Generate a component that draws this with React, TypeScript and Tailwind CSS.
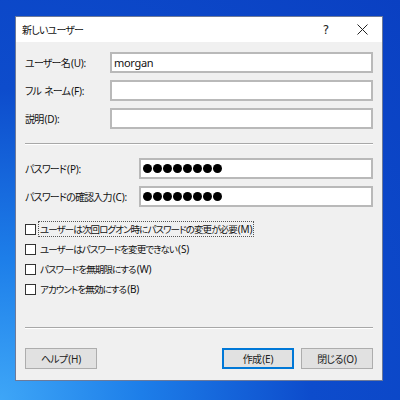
import React from "react";

const font = "font-['Noto_Sans_CJK_JP','Noto_Sans',sans-serif] [font-feature-settings:'palt'] text-[10px] leading-[14px]";

function T({ s, tr = "tracking-[-0.8px]" }: { s: string; tr?: string }) {
  const i = s.indexOf("(");
  const jp = i >= 0 ? s.slice(0, i) : s;
  const la = i >= 0 ? s.slice(i) : "";
  const parts = jp.split(" ");
  return (
    <span className="whitespace-nowrap">
      {parts.map((p, k) => (
        <span key={k} className={tr + (k > 0 ? " ml-[3px]" : "")}>
          {p}
        </span>
      ))}
      {la && <span className="font-['Noto_Sans',sans-serif] text-[10px] tracking-[-0.2px] ml-[1px]">{la}</span>}
    </span>
  );
}

function Field({ value }: { value?: string }) {
  return (
    <div className="flex-1 h-[21px] bg-white border-2 border-[#b9b9b9] flex items-center pl-[2px] text-[#111] text-[11px] font-['Noto_Sans',sans-serif] tracking-[-0.3px]">
      {value}
    </div>
  );
}

function Dots() {
  return (
    <div className="flex-1 h-[21px] bg-white border-2 border-[#b9b9b9] flex items-center pl-[2px] gap-[1px]">
      {Array.from({ length: 8 }).map((_, i) => (
        <span key={i} className="w-[9px] h-[9px] rounded-full bg-black" />
      ))}
    </div>
  );
}

function Check({ label, focus }: { label: string; focus?: boolean }) {
  return (
    <div className="h-[20px] flex items-center">
      <span className="w-[11px] h-[11px] border border-[#333] bg-white shrink-0" />
      <span
        className={
          "ml-[2px] px-[1px] text-[#111] flex" +
          (focus ? " border border-dotted border-[#555]" : " border border-transparent")
        }
      >
        <T s={label} tr="text-[9.5px] tracking-[-0.9px]" />
      </span>
    </div>
  );
}

function Sep() {
  return <div className="h-[2px] border-t border-[#a8a8a8] border-b border-b-white" />;
}

function Row({ w, s, children }: { w: string; s: string; children: React.ReactNode }) {
  return (
    <div className="h-[21px] flex items-center">
      <span className={w + " text-[#111] flex"}>
        <T s={s} />
      </span>
      {children}
    </div>
  );
}

function Btn({ s, extra }: { s: string; extra: string }) {
  return (
    <button className={"w-[72px] h-[21px] bg-[#e1e1e1] text-[#222] flex items-center justify-center " + extra}>
      <T s={s} />
    </button>
  );
}

export default function App() {
  return (
    <div
      className={
        "w-[400px] h-[400px] overflow-hidden bg-[radial-gradient(ellipse_at_0%_100%,#3ea6f7_0%,#1d7ee9_25%,#0d4ccc_55%,#0a40c2_100%)] pt-[16px] pl-[15px] " +
        font
      }
    >
      <div className="w-[368px] h-[365px] border border-[#6d7a99] bg-[#f0f0f0] flex flex-col">
        <div className="h-[25px] bg-white flex items-center pl-[6px] shrink-0">
          <span className="text-[#111] tracking-[-0.8px]">新しいユーザー</span>
          <span className="ml-auto mr-[28px] text-[12px] text-[#222] font-['DejaVu_Sans',sans-serif]">?</span>
          <svg width="11" height="11" viewBox="0 0 11 11" className="mr-[14px]">
            <path d="M0.5 0.5 L10.5 10.5 M10.5 0.5 L0.5 10.5" stroke="#222" strokeWidth="1" />
          </svg>
        </div>
        <div className="flex-1 px-[9px] pt-[10px] pb-[11px] flex flex-col">
          <div className="flex flex-col gap-[7px]">
            <Row w="w-[85px]" s="ユーザー名(U):">
              <Field value="morgan" />
            </Row>
            <Row w="w-[85px]" s="フル ネーム(F):">
              <Field />
            </Row>
            <Row w="w-[85px]" s="説明(D):">
              <Field />
            </Row>
          </div>
          <div className="mt-[14px]">
            <Sep />
          </div>
          <div className="mt-[13px] flex flex-col gap-[7px]">
            <Row w="w-[114px]" s="パスワード(P):">
              <Dots />
            </Row>
            <Row w="w-[114px]" s="パスワードの確認入力(C):">
              <Dots />
            </Row>
          </div>
          <div className="mt-[12px] flex flex-col">
            <Check label="ユーザーは次回ログオン時にパスワードの変更が必要(M)" focus />
            <Check label="ユーザーはパスワードを変更できない(S)" />
            <Check label="パスワードを無期限にする(W)" />
            <Check label="アカウントを無効にする(B)" />
          </div>
          <div className="mt-auto">
            <Sep />
            <div className="mt-[19px] flex items-center">
              <Btn s="ヘルプ(H)" extra="border border-[#adadad]" />
              <Btn s="作成(E)" extra="ml-auto border-2 border-[#0078d7]" />
              <Btn s="閉じる(O)" extra="ml-[7px] border border-[#adadad]" />
            </div>
          </div>
        </div>
      </div>
    </div>
  );
}
